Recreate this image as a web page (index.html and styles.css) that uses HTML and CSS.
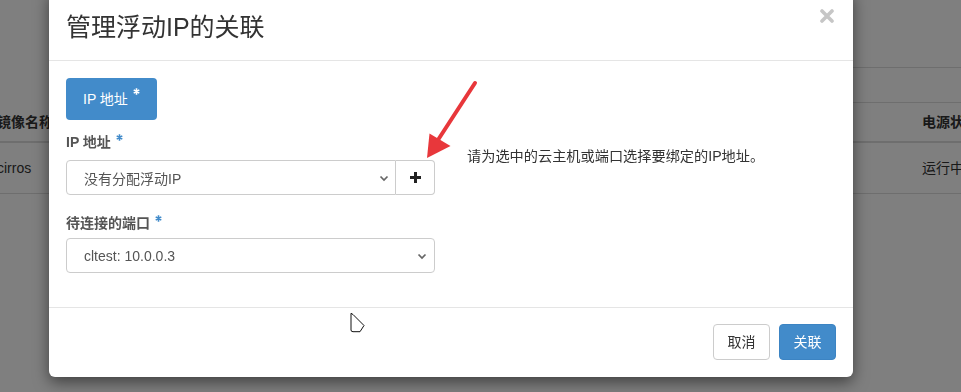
FILE: index.html
```html
<!DOCTYPE html>
<html lang="zh-CN">
<head>
<meta charset="utf-8">
<title>管理浮动IP的关联</title>
<link rel="stylesheet" href="styles.css">
</head>
<body>
<div class="page">
  <div class="filter-row"></div>
  <div class="trow thead">
    <div class="cell c1">镜像名称</div>
    <div class="cell c2">电源状态</div>
  </div>
  <div class="trow tbody">
    <div class="cell c1">cirros</div>
    <div class="cell c2">运行中</div>
  </div>
</div>
<div class="backdrop"></div>
<div class="modal">
  <div class="modal-header">
    <h3 class="modal-title">管理浮动IP的关联</h3>
    <svg class="close" width="14" height="14" viewBox="0 0 14 14"><path d="M2 2L12 12M12 2L2 12" stroke="#c6c6c6" stroke-width="3.6" stroke-linecap="round"/></svg>
  </div>
  <div class="modal-body">
    <div class="nav">
      <span class="tab"><span class="tab-label">IP 地址<svg class="ast" width="7" height="7" viewBox="0 0 7 7"><path d="M3.5 0.3V6.7M0.7 1.9L6.3 5.1M0.7 5.1L6.3 1.9" stroke="#fff" stroke-width="1.6"/></svg></span></span>
    </div>
    <div class="row">
      <div class="col-form">
        <div class="form-group g1">
          <label class="label">IP 地址<svg class="ast" width="7" height="7" viewBox="0 0 7 7"><path d="M3.5 0.3V6.7M0.7 1.9L6.3 5.1M0.7 5.1L6.3 1.9" stroke="#428bca" stroke-width="1.6"/></svg></label>
          <div class="input-group">
            <div class="select grouped">
              <span>没有分配浮动IP</span>
              <svg class="chev" width="10" height="7" viewBox="0 0 10 7"><path d="M1.5 1.5L5 5L8.5 1.5" fill="none" stroke="#666" stroke-width="1.7"/></svg>
            </div>
            <div class="addon">
              <svg width="11" height="11" viewBox="0 0 11 11"><path d="M4 0H7V4H11V7H7V11H4V7H0V4H4Z" fill="#222"/></svg>
            </div>
          </div>
        </div>
        <div class="form-group g2">
          <label class="label">待连接的端口<svg class="ast" width="7" height="7" viewBox="0 0 7 7"><path d="M3.5 0.3V6.7M0.7 1.9L6.3 5.1M0.7 5.1L6.3 1.9" stroke="#428bca" stroke-width="1.6"/></svg></label>
          <div class="select full">
            <span>cltest: 10.0.0.3</span>
            <svg class="chev" width="10" height="7" viewBox="0 0 10 7"><path d="M1.5 1.5L5 5L8.5 1.5" fill="none" stroke="#666" stroke-width="1.7"/></svg>
          </div>
        </div>
      </div>
      <div class="col-help">
        <p class="help">请为选中的云主机或端口选择要绑定的IP地址。</p>
      </div>
    </div>
  </div>
  <div class="modal-footer">
    <button class="btn btn-default">取消</button>
    <button class="btn btn-primary">关联</button>
  </div>
</div>
<svg class="arrow" width="70" height="95" viewBox="420 72 70 95">
  <line x1="475" y1="83" x2="436" y2="143" stroke="#e8373b" stroke-width="4" stroke-linecap="round"/>
  <polygon points="427,158 429.5,133.5 450.5,146" fill="#e8373b"/>
</svg>
<svg class="cursor" width="18" height="24" viewBox="0 0 18 24">
  <path d="M2 2.3V19Q2 20.7 4 20.7H11L15 14.5L4 3.5Z" fill="#fff" stroke="#111" stroke-width="1" stroke-linejoin="round"/>
</svg>
</body>
</html>
```
FILE: styles.css
```css
* { box-sizing: border-box; }
html, body { margin: 0; padding: 0; }
body {
  width: 961px;
  height: 392px;
  overflow: hidden;
  background: #fff;
  font-family: "Liberation Sans", "Noto Sans CJK SC", sans-serif;
  font-size: 14px;
  color: #333;
}

/* background page */
.page { padding-top: 67px; }
.filter-row {
  margin-left: 300px;
  height: 36px;
  border-top: 1px solid #ddd;
  border-bottom: 1px solid #ddd;
}
.trow {
  display: grid;
  grid-template-columns: 925px 1fr;
}
.thead { height: 40px; line-height: 38px; border-bottom: 2px solid #ddd; font-weight: bold; }
.tbody { height: 51px; line-height: 50px; border-bottom: 1px solid #ddd; }
.c1 { margin-left: -3px; }
.c2 { margin-left: -3px; white-space: nowrap; }

.backdrop {
  position: fixed;
  inset: 0;
  background: rgba(0, 0, 0, 0.5);
}

/* modal */
.modal {
  position: absolute;
  left: 49px;
  top: -10px;
  width: 804px;
  background: #fff;
  border-radius: 6px;
  box-shadow: 0 5px 15px rgba(0, 0, 0, 0.5);
}
.modal-header {
  display: flex;
  justify-content: space-between;
  height: 71px;
  padding: 0 19px 0 17px;
  border-bottom: 1px solid #e5e5e5;
}
.modal-title {
  margin: 0;
  align-self: center;
  padding-top: 3px;
  font-size: 25px;
  font-weight: normal;
  line-height: 30px;
  color: #333;
}
.close { margin-top: 19px; }

.modal-body { padding: 17px 17px 34px; }
.nav { margin-bottom: 12px; }
.tab {
  display: inline-flex;
  align-items: center;
  width: 91px;
  height: 42px;
  padding-left: 17px;
  background: #428bca;
  color: #fff;
  border-radius: 4px;
}
.tab-label { display: flex; align-items: flex-start; line-height: 20px; }
.tab-label .ast { margin-top: -1px; margin-left: 5px; }

.row { display: flex; }
.col-form { width: 369px; }
.col-help { margin-left: 32px; padding-top: 14px; }
.help { margin: 0; line-height: 20px; color: #333; font-size: 14.2px; }

.label {
  display: flex;
  align-items: flex-start;
  font-weight: bold;
  line-height: 20px;
  color: #555;
}
.label .ast { margin-top: 2px; margin-left: 5px; }
.g1 .label { margin-bottom: 8px; }
.g2 { margin-top: 18px; }
.g2 .label { margin-bottom: 5px; }

.input-group { display: flex; height: 35px; }
.select {
  display: flex;
  align-items: center;
  justify-content: space-between;
  height: 35px;
  padding-left: 17px;
  border: 1px solid #ccc;
  color: #555;
}
.select.grouped { flex: 1; border-radius: 4px 0 0 4px; padding-right: 6px; }
.select.full { border-radius: 4px; padding-right: 7px; }
.chev { margin-top: 1px; }
.addon {
  width: 39px;
  display: flex;
  align-items: center;
  justify-content: center;
  border: 1px solid #ccc;
  border-left: 0;
  border-radius: 0 4px 4px 0;
}

.modal-footer {
  display: flex;
  justify-content: flex-end;
  gap: 9px;
  padding: 16px 17px 17px;
  border-top: 1px solid #e5e5e5;
}
.btn {
  width: 57px;
  height: 36px;
  padding: 0;
  border-radius: 4px;
  font-family: inherit;
  font-size: 14px;
  line-height: 20px;
}
.btn-default { background: #fff; border: 1px solid #ccc; color: #333; }
.btn-primary { background: #428bca; border: 1px solid #3c84c3; color: #fff; }

.arrow { position: absolute; left: 420px; top: 72px; }
.cursor { position: absolute; left: 349px; top: 311px; }
```
